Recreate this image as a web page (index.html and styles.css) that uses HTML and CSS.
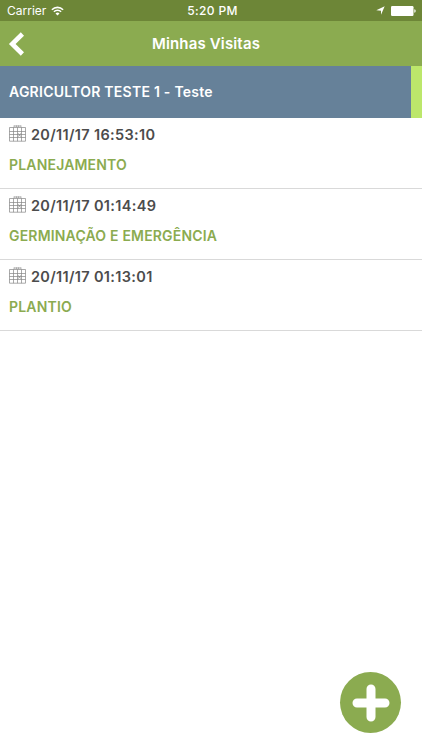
FILE: index.html
```html
<!DOCTYPE html>
<html lang="pt-BR">
<head>
    <meta charset="UTF-8">
    <meta name="viewport" content="width=device-width, initial-scale=1.0">
    <title>Minhas Visitas</title>
    <link rel="stylesheet" href="styles.css">
</head>
<body>
    <!-- Calendar icon shared by all the visits -->
    <svg class="symbols" aria-hidden="true">
        <symbol id="calendar" viewBox="0 0 17 17">
            <path d="M.5 2.5h16v13.7H.5zM.5 6.5h16M.5 9.5h16M.5 12.5h16M4.5 2.5v13.7M8.5 2.5v13.7M12.5 2.5v13.7"/>
            <path d="M5 1h7M5 .5v1.3M7.5.5v1.3M9.5.5v1.3M12 .5v1.3M9 8.2l3 3.6M12 8.2l-3 3.6"/>
        </symbol>
    </svg>

    <div class="screen">
        <div class="status-bar">
            <div class="status-left">
                <span class="carrier">Carrier</span>
                <svg class="wifi" viewBox="0 0 13 10">
                    <path d="M.9 3.7a8 8 0 0 1 11.2 0M2.9 5.8a5.1 5.1 0 0 1 7.2 0"/>
                    <path class="wifi-dot" d="M4.5 7.4a2.8 2.8 0 0 1 4 0l-2 2z"/>
                </svg>
            </div>
            <span class="time">5:20 PM</span>
            <div class="status-right">
                <svg class="location" viewBox="0 0 9 9"><path d="M8.7.3 5 8.7V4.8L.3 4.2z"/></svg>
                <svg class="battery" viewBox="0 0 25 10">
                    <rect width="22.5" height="10" rx="1.2"/>
                    <path d="M23.3 3.3c1.8 0 1.8 3.4 0 3.4z"/>
                </svg>
            </div>
        </div>

        <header class="nav-bar">
            <button class="back" aria-label="Voltar">
                <svg viewBox="0 0 16 24"><path d="M13.4 2 3.2 12l10.2 10"/></svg>
            </button>
            <h1>Minhas Visitas</h1>
        </header>

        <div class="farmer"><span>AGRICULTOR TESTE 1 - Teste</span></div>

        <ul class="visit-list">
            <li class="visit">
                <div class="visit-date"><svg><use href="#calendar"/></svg><span>20/11/17 16:53:10</span></div>
                <div class="visit-stage">PLANEJAMENTO</div>
            </li>
            <li class="visit">
                <div class="visit-date"><svg><use href="#calendar"/></svg><span>20/11/17 01:14:49</span></div>
                <div class="visit-stage">GERMINAÇÃO E EMERGÊNCIA</div>
            </li>
            <li class="visit">
                <div class="visit-date"><svg><use href="#calendar"/></svg><span>20/11/17 01:13:01</span></div>
                <div class="visit-stage">PLANTIO</div>
            </li>
        </ul>

        <button class="add-button" aria-label="Nova visita">
            <svg viewBox="0 0 38 38"><path d="M19 5v28M5 19h28"/></svg>
        </button>
    </div>
</body>
</html>
```
FILE: styles.css
```css
:root {
    --green: #8bab50;
    --green-dark: #6d8637;
    --green-light: #bce76b;
    --blue: #668199;
    --text: #4c4c4c;
    --line: #d9d9d9;
}

* {
    box-sizing: border-box;
}

body {
    margin: 0;
    background-color: #fff;
    color: var(--text);
    font-family: Inter, 'Helvetica', sans-serif;
}

button {
    padding: 0;
    border: none;
    background: none;
    cursor: pointer;
}

svg {
    display: block;
    flex-shrink: 0;
}

.symbols {
    display: none;
}

.screen {
    height: 750px;
    overflow: hidden;
}

.status-bar {
    display: grid;
    grid-template-columns: 1fr auto 1fr;
    align-items: center;
    height: 21px;
    padding: 0 6px 0 7px;
    background-color: var(--green-dark);
    color: #fff;
    font-size: 12px;
}

.status-left,
.status-right {
    display: flex;
    align-items: center;
}

.status-left {
    gap: 5px;
}

.status-right {
    justify-content: flex-end;
    gap: 6px;
    fill: #fff;
}

.time {
    padding-left: 2px;
    font-weight: 500;
    letter-spacing: 0.35px;
}

.wifi {
    width: 13px;
    height: 10px;
    fill: none;
    stroke: #fff;
    stroke-width: 1.6;
}

.wifi-dot {
    fill: #fff;
    stroke: none;
}

.location {
    width: 9px;
    height: 9px;
}

.battery {
    width: 25px;
    height: 10px;
}

.nav-bar {
    display: grid;
    grid-template-columns: 34px 1fr 46px;
    align-items: center;
    height: 45px;
    padding: 0 4px 0 6px;
    background-color: var(--green);
}

.back svg {
    width: 18px;
    height: 24px;
    margin-left: 2px;
    fill: none;
    stroke: #fff;
    stroke-width: 4.6;
}

h1 {
    margin: 0;
    color: #fff;
    font-size: 15px;
    font-weight: 600;
    letter-spacing: 0.15px;
    text-align: center;
}

.farmer {
    display: flex;
    align-items: center;
    height: 51.5px;
    padding-left: 9px;
    border-right: 11px solid var(--green-light);
    background-color: var(--blue);
    color: #fff;
    font-size: 14px;
    font-weight: 600;
    letter-spacing: 0.25px;
}

.visit-list {
    margin: 0;
    padding: 0;
    list-style: none;
}

.visit {
    height: 71px;
    padding: 7px 9px 0;
    border-bottom: 1px solid var(--line);
    font-size: 14px;
    font-weight: 600;
    line-height: 20px;
}

.visit-date {
    display: flex;
    align-items: center;
    gap: 5px;
    font-size: 14.5px;
    letter-spacing: 0.33px;
}

.visit-date svg {
    width: 17px;
    height: 17px;
    margin-bottom: 2px;
    fill: none;
    stroke: #858585;
    stroke-width: 0.7;
}

.visit-stage {
    margin-top: 10px;
    color: var(--green);
    letter-spacing: 0.18px;
}

.add-button {
    position: absolute;
    right: 21px;
    bottom: 17px;
    display: flex;
    align-items: center;
    justify-content: center;
    width: 61px;
    height: 61px;
    border-radius: 50%;
    background-color: var(--green);
}

.add-button svg {
    width: 38px;
    height: 38px;
    fill: none;
    stroke: #fff;
    stroke-width: 9;
    stroke-linecap: round;
}
```
